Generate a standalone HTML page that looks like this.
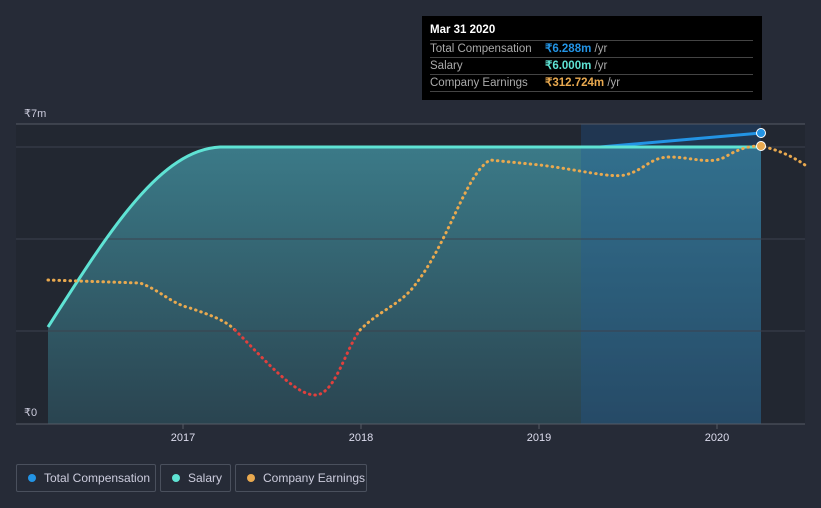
<!DOCTYPE html><html><head><style>
body{margin:0;background:#262b37;font-family:"Liberation Sans",sans-serif;width:821px;height:508px;overflow:hidden;position:relative}
.tt{position:absolute;left:422px;top:16px;width:340px;height:84px;background:#000;color:#fff;font-size:11.5px}
.tt .h{position:absolute;left:8px;top:8px;font-weight:bold}
.r{position:absolute;left:8px;width:323px;border-top:1px solid #444;height:16px;line-height:16px;color:#aaa}
.r b{position:absolute;left:115px;font-weight:bold}
.r span{color:#aaa;font-weight:normal}
.lg{position:absolute;top:464px;height:28px;border:1px solid #4a505d;border-radius:2px;color:#ccd;font-size:12px;line-height:26px;box-sizing:border-box}
.lg i{position:absolute;left:11px;top:9px;width:8px;height:8px;border-radius:50%}
.lg span{position:absolute;left:27px}
</style></head><body>
<svg width="821" height="508" style="position:absolute;left:0;top:0">
<defs><linearGradient id="g" x1="0" y1="0" x2="0" y2="1"><stop offset="0" stop-color="#3b7a88"/><stop offset="1" stop-color="#2a4450"/></linearGradient></defs>
<rect x="16" y="124" width="789" height="300" fill="#222731"/>
<path d="M48 327 C110 230 160 150 220 147 L761 147 L761 424 L48 424Z" fill="url(#g)"/>
<rect x="581" y="124" width="180" height="300" fill="#1e5a9a" opacity="0.3"/>
<line x1="16" y1="124" x2="805" y2="124" stroke="#555b66"/>
<line x1="16" y1="147" x2="805" y2="147" stroke="#3c424e"/>
<line x1="16" y1="239" x2="805" y2="239" stroke="#3c424e"/>
<line x1="16" y1="331" x2="805" y2="331" stroke="#3c424e"/>
<line x1="16" y1="424" x2="805" y2="424" stroke="#555b66"/>
<line x1="183" y1="424" x2="183" y2="429" stroke="#555b66"/><line x1="361" y1="424" x2="361" y2="429" stroke="#555b66"/><line x1="539" y1="424" x2="539" y2="429" stroke="#555b66"/><line x1="717" y1="424" x2="717" y2="429" stroke="#555b66"/>
<path d="M600 147 L761 133" stroke="#2394e5" stroke-width="3" fill="none"/>
<path d="M48 327 C110 230 160 150 220 147 L761 147" stroke="#5fe3d4" stroke-width="3" fill="none"/>
<g stroke-width="3" stroke-dasharray="0.5 5" stroke-linecap="round" fill="none">
<path d="M48 280 L140 283 C160 290 170 303 190 308 C210 315 225 320 235 330" stroke="#e9a94f"/>
<path d="M235 330 C265 360 295 395 315 395 C335 395 345 350 360 330" stroke="#e0403d"/>
<path d="M360 330 C380 310 400 305 415 285 C450 240 465 175 490 160 L540 165 C580 170 610 178 625 175 C645 170 650 157 670 157 C690 157 710 165 725 157 C740 148 750 146 760 146 C780 150 795 158 805 165" stroke="#e9a94f"/>
</g>
<circle cx="761" cy="133" r="4.5" fill="#2394e5" stroke="#fff" stroke-width="1"/>
<circle cx="761" cy="146" r="4.5" fill="#e9a94f" stroke="#fff" stroke-width="1"/>
<text x="24" y="117" fill="#ccd" font-size="11">₹7m</text>
<text x="24" y="416" fill="#ccd" font-size="11">₹0</text>
<g fill="#dde" font-size="11" text-anchor="middle"><text x="183" y="441">2017</text><text x="361" y="441">2018</text><text x="539" y="441">2019</text><text x="717" y="441">2020</text></g>
</svg>
<div class="tt"><div class="h">Mar 31 2020</div>
<div class="r" style="top:24px">Total Compensation<b style="color:#2394e5">₹6.288m <span>/yr</span></b></div>
<div class="r" style="top:41px">Salary<b style="color:#5fe3d4">₹6.000m <span>/yr</span></b></div>
<div class="r" style="top:58px">Company Earnings<b style="color:#e9a94f">₹312.724m <span>/yr</span></b></div>
<div class="r" style="top:75px;height:0"></div></div>
<div class="lg" style="left:16px;width:140px"><i style="background:#2394e5"></i><span>Total Compensation</span></div>
<div class="lg" style="left:160px;width:71px"><i style="background:#5fe3d4"></i><span>Salary</span></div>
<div class="lg" style="left:235px;width:132px"><i style="background:#e9a94f"></i><span>Company Earnings</span></div>
</body></html>
